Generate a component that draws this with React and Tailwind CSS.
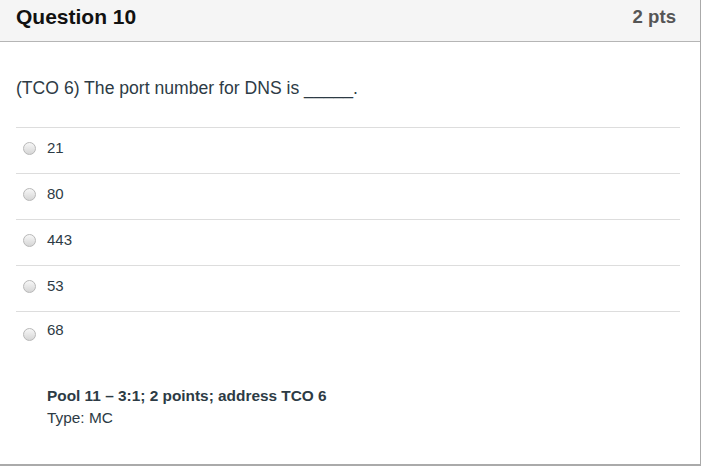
export default function App() {
  const options = ["21", "80", "443", "53"];
  return (
    <div className="w-[701px] h-[467px] bg-white" style={{ fontFamily: '"Liberation Sans", Arial, sans-serif' }}>
      <div className="w-[701px] h-[466px] border-r border-b-2 border-[#aaaaaa] flex flex-col">
        <div className="h-[42px] bg-[#f5f5f5] border-b border-[#b5b5b5] flex items-center justify-between pl-[16px] pr-[24px] pb-[7px]">
          <span className="text-[21px] font-bold text-[#111111]">Question 10</span>
          <span className="text-[18.6px] font-bold text-[#555555]">2 pts</span>
        </div>
        <div className="pl-[16px] pr-[20px] pt-[36px] text-[#2d3b45]">
          <div className="text-[17.6px] leading-[20px] h-[49px]">(TCO 6) The port number for DNS is _____.</div>
          <div>
            {options.map((o) => (
              <div key={o} className="border-t border-[#dddddd] h-[46px] flex items-center pb-[4px]">
                <span className="ml-[7px] w-[13px] h-[13px] rounded-full border border-[#b8b8b8] bg-gradient-to-b from-[#f7f7f7] to-[#d6d6d6]" />
                <span className="ml-[11px] text-[15px]">{o}</span>
              </div>
            ))}
            <div className="border-t border-[#dddddd] h-[59px] flex items-start pt-[10px]">
              <span className="ml-[7px] mt-[6px] w-[13px] h-[13px] rounded-full border border-[#b8b8b8] bg-gradient-to-b from-[#f7f7f7] to-[#d6d6d6]" />
              <span className="ml-[11px] text-[15px] leading-[16px]">68</span>
            </div>
          </div>
          <div className="pl-[31px] pt-[15px] text-[15.4px] leading-[22px]">
            <div className="font-bold">Pool 11 – 3:1; 2 points; address TCO 6</div>
            <div>Type: MC</div>
          </div>
        </div>
      </div>
    </div>
  );
}
